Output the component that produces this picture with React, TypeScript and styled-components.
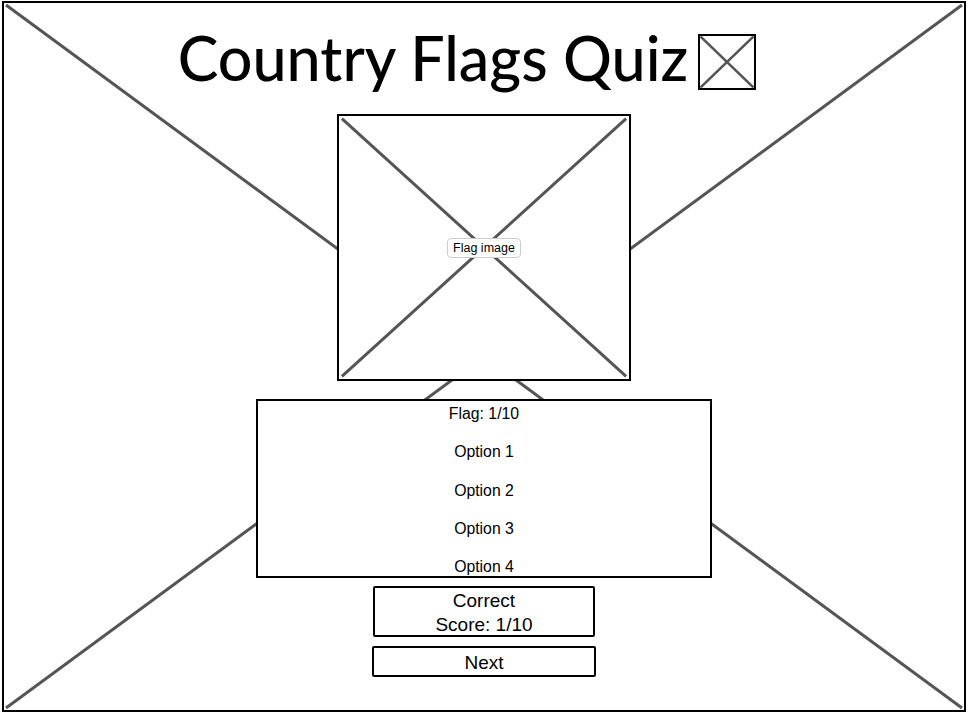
import React from "react";
import styled, { createGlobalStyle } from "styled-components";

const GlobalStyle = createGlobalStyle`
  html, body {
    margin: 0;
    padding: 0;
    background: #fff;
  }
  body {
    font-family: "Liberation Sans", Arial, sans-serif;
    color: #000;
  }
`;

const Frame = styled.div`
  position: relative;
  box-sizing: border-box;
  width: 964px;
  height: 711px;
  margin: 1px 0 0 2px;
  border: 2px solid #000;
  display: flex;
  flex-direction: column;
  align-items: center;
  overflow: hidden;
`;

const Backdrop = styled.svg`
  position: absolute;
  inset: 0;
  width: 100%;
  height: 100%;
  z-index: 0;
`;

const Content = styled.div`
  position: relative;
  z-index: 1;
  display: flex;
  flex-direction: column;
  align-items: center;
  padding-top: 31px;
`;

const TitleRow = styled.div`
  display: flex;
  align-items: center;
  gap: 10px;
  margin-right: 34px;
  height: 56px;
`;

const Title = styled.h1`
  margin: 0 0 8px;
  font-family: Lato, "Open Sans", sans-serif;
  font-weight: 500;
  font-size: 61px;
  line-height: 56px;
  white-space: nowrap;
`;

const ImageBox = styled.div<{ $w: number; $h: number }>`
  position: relative;
  box-sizing: border-box;
  width: ${(p) => p.$w}px;
  height: ${(p) => p.$h}px;
  border: 2px solid #000;
  background: #fff;
  display: flex;
  align-items: center;
  justify-content: center;
`;

const Cross = styled.svg`
  position: absolute;
  inset: 0;
  width: 100%;
  height: 100%;
`;

const ImageLabel = styled.span`
  position: relative;
  z-index: 1;
  box-sizing: border-box;
  height: 20px;
  padding: 0 5px;
  border: 1px solid #ccc;
  border-radius: 4px;
  background: #fff;
  font-size: 12.5px;
  line-height: 18px;
`;

const FlagArea = styled.div`
  margin-top: 24px;
`;

const OptionsBox = styled.div`
  box-sizing: border-box;
  width: 456px;
  height: 179px;
  margin-top: 18px;
  padding-top: 1px;
  border: 2px solid #000;
  background: #fff;
  display: flex;
  flex-direction: column;
  align-items: center;
  gap: 14.3px;
`;

const OptionText = styled.div`
  font-size: 15.8px;
  line-height: 24px;
`;

const Panel = styled.div<{ $w: number; $h: number; $gap: number }>`
  box-sizing: border-box;
  width: ${(p) => p.$w}px;
  height: ${(p) => p.$h}px;
  margin-top: ${(p) => p.$gap}px;
  padding-top: 3px;
  border: 2px solid #000;
  border-radius: 2px;
  background: #fff;
  display: flex;
  flex-direction: column;
  align-items: center;
  justify-content: center;
  font-size: 19px;
  line-height: 24px;
`;

function PlaceholderCross({ stroke }: { stroke: number }) {
  return (
    <Cross viewBox="0 0 100 100" preserveAspectRatio="none">
      <line x1="1" y1="1" x2="99" y2="99" stroke="#555" strokeWidth={stroke} vectorEffect="non-scaling-stroke" />
      <line x1="99" y1="1" x2="1" y2="99" stroke="#555" strokeWidth={stroke} vectorEffect="non-scaling-stroke" />
    </Cross>
  );
}

const options = ["Option 1", "Option 2", "Option 3", "Option 4"];

export default function App() {
  return (
    <>
      <GlobalStyle />
      <Frame>
        <Backdrop viewBox="0 0 960 707" preserveAspectRatio="none">
          <line x1="2" y1="2" x2="958" y2="705" stroke="#555" strokeWidth="3" />
          <line x1="958" y1="2" x2="2" y2="705" stroke="#555" strokeWidth="3" />
        </Backdrop>
        <Content>
          <TitleRow>
            <Title>Country Flags Quiz</Title>
            <ImageBox $w={58} $h={56}>
              <PlaceholderCross stroke={2.5} />
            </ImageBox>
          </TitleRow>
          <FlagArea>
            <ImageBox $w={294} $h={267}>
              <PlaceholderCross stroke={3} />
              <ImageLabel>Flag image</ImageLabel>
            </ImageBox>
          </FlagArea>
          <OptionsBox>
            <OptionText>Flag: 1/10</OptionText>
            {options.map((o) => (
              <OptionText key={o}>{o}</OptionText>
            ))}
          </OptionsBox>
          <Panel $w={222} $h={51} $gap={8}>
            <div>Correct</div>
            <div>Score: 1/10</div>
          </Panel>
          <Panel $w={224} $h={31} $gap={9}>
            Next
          </Panel>
        </Content>
      </Frame>
    </>
  );
}
